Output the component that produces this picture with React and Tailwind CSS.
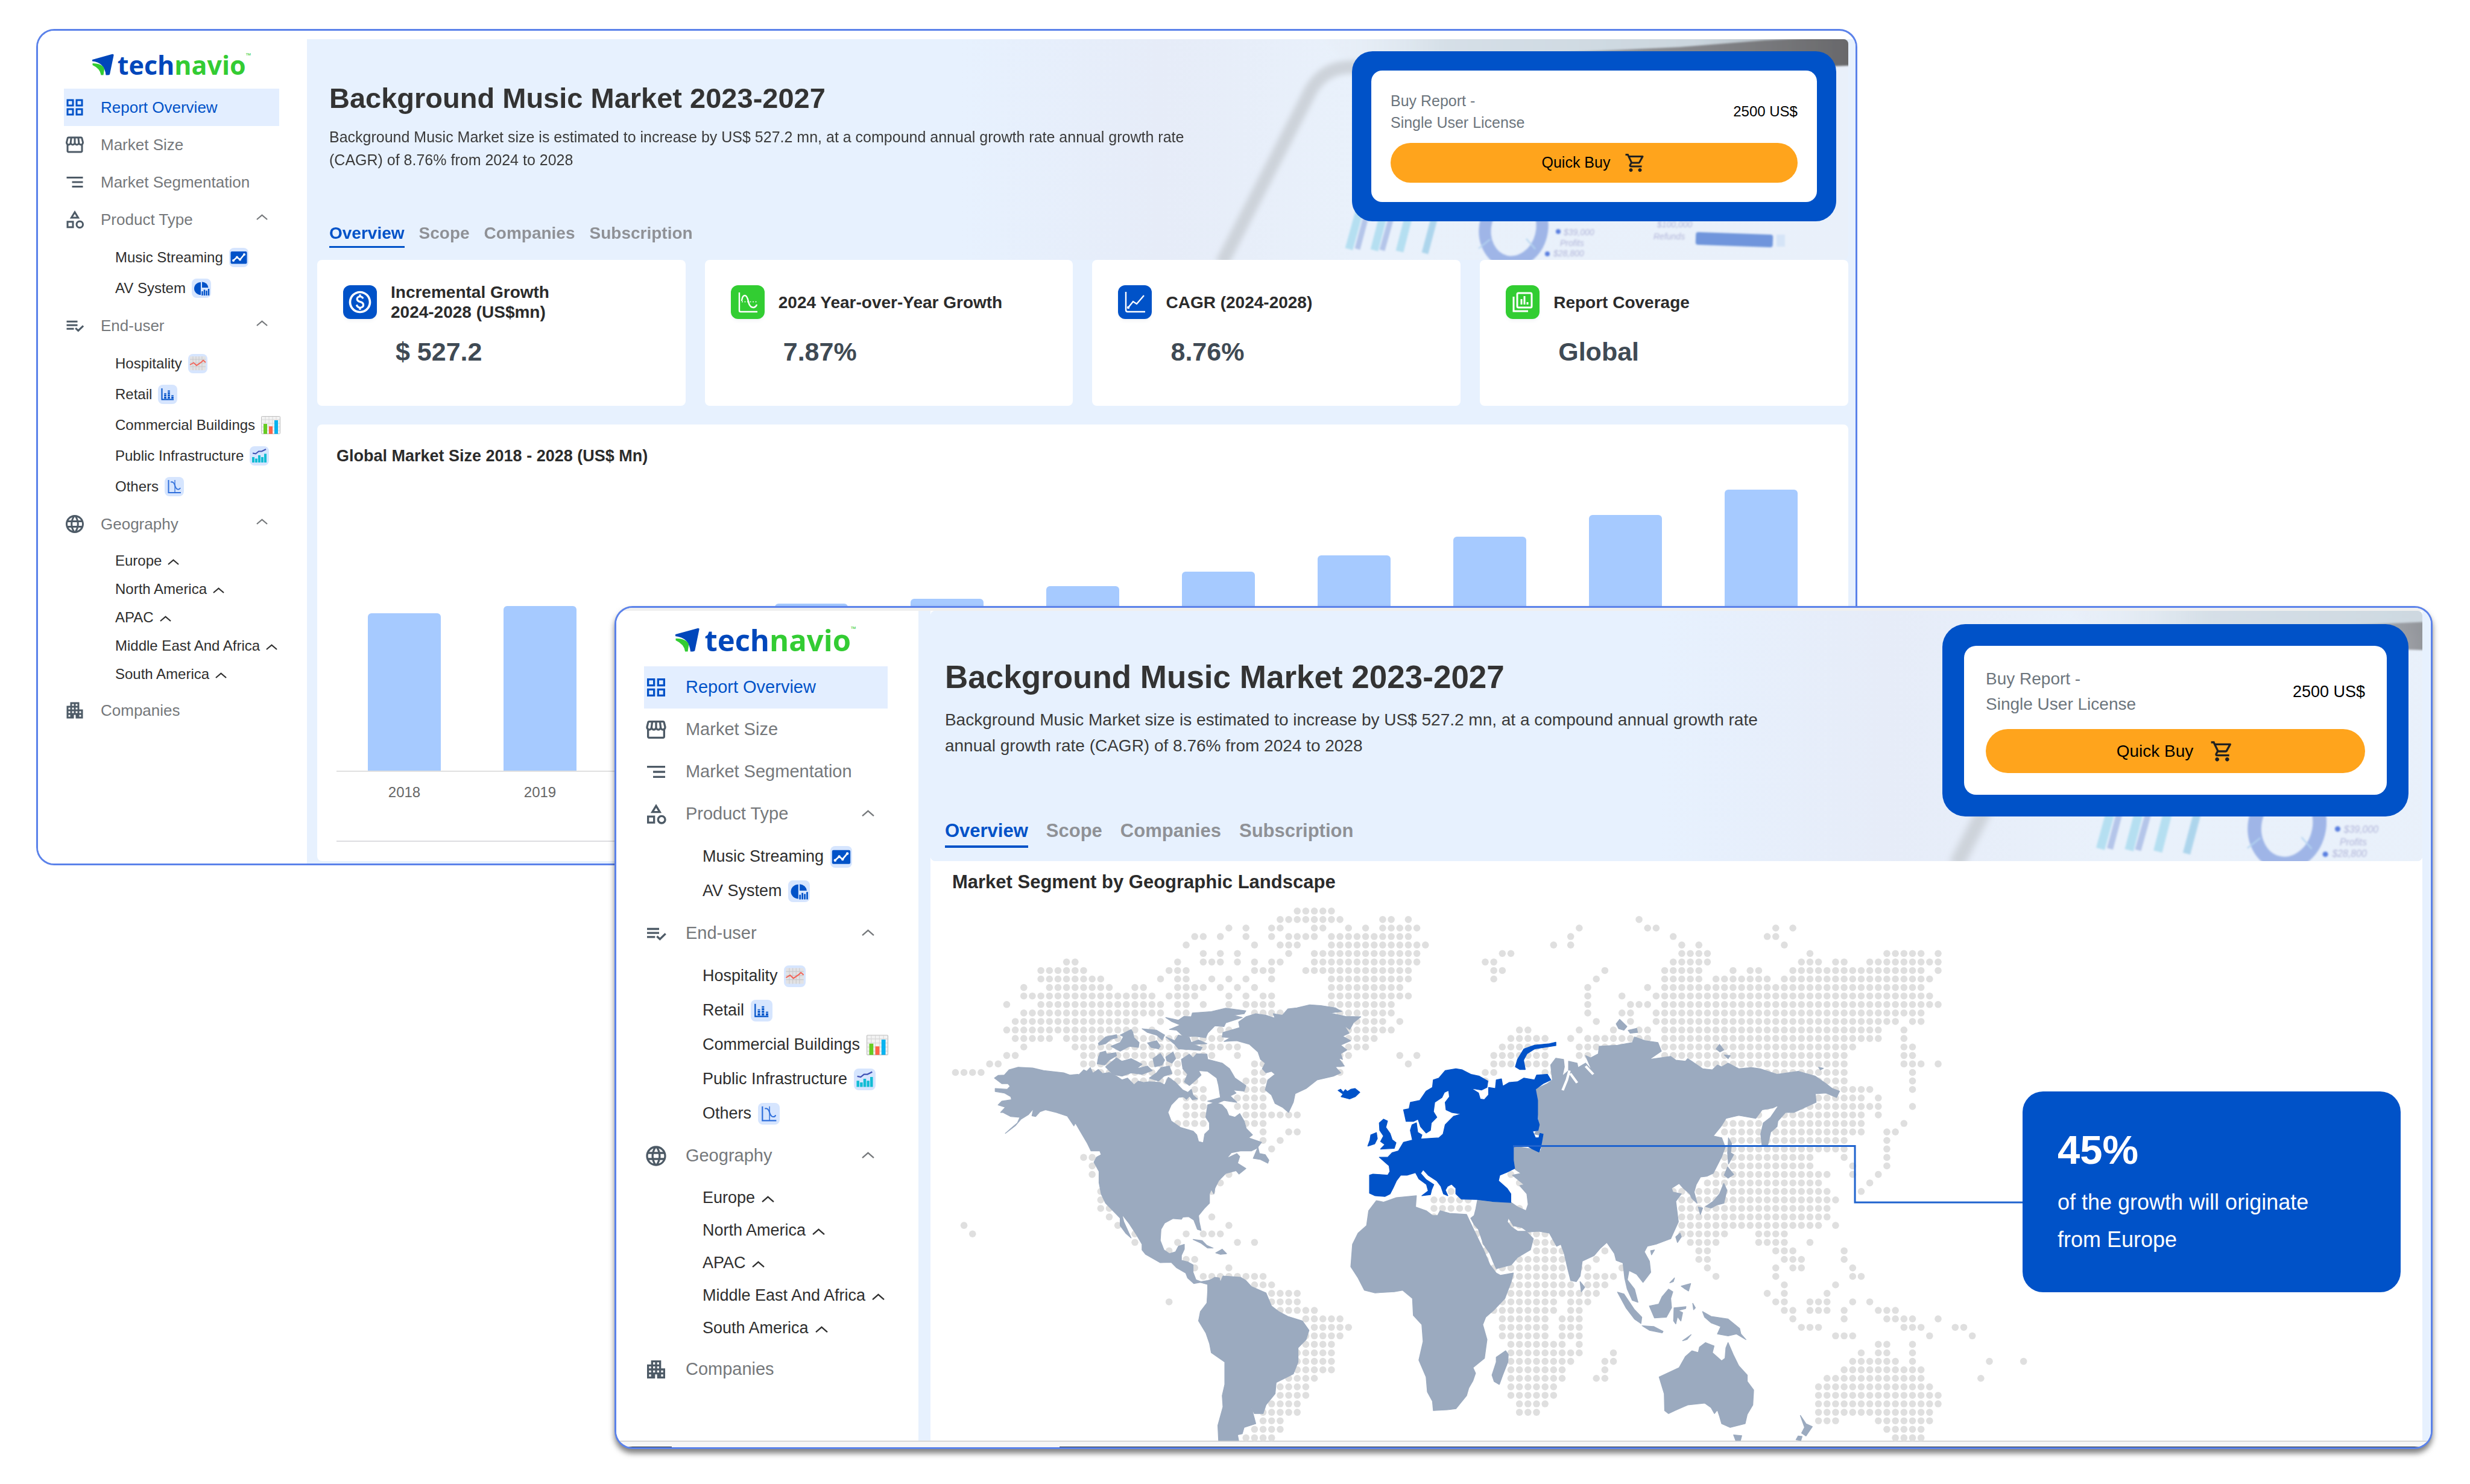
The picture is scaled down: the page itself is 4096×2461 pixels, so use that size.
import React from 'react';
import { clsx } from 'clsx';
import {
    MdApartment,
    MdLanguage,
    MdOutlineCategory,
    MdOutlineGridView,
    MdOutlinePaid,
    MdOutlineShoppingCart,
    MdOutlineStorefront,
    MdSegment,
} from 'react-icons/md';

/* The same report is shown in two windows, one of them slightly larger */
const SIZES = {
    md: {
        sidebar: 'w-[446px] pl-[43px] pr-[46px]',
        logoRow: 'h-24 pt-4 gap-[6px]',
        logoText: 'text-[43px]',
        logoMark: 'h-9 w-9',
        row: 'h-[62px] gap-[25px] text-[26px]',
        rowIcon: 'h-9 w-9',
        chevronWrap: 'pr-[19px] pb-2',
        chevron: 'h-[10px] w-[19px]',
        group: 'py-[6px] pl-[85px]',
        child: 'text-[24px] gap-[10px]',
        badgeRow: 'h-[51px]',
        plainRow: 'h-[47px]',
        badge: 'h-8 w-8',
        banner: 'min-h-[366px] pl-5 pr-5 pt-5',
        h1: 'mt-[50px] text-[47px] leading-[56px]',
        lead: 'mt-[17px] max-w-[1440px] text-[25px] leading-[38px]',
        tabs: 'mb-5 gap-6 text-[28px]',
        tab: 'border-b-[3px] leading-[36px] pb-[3px]',
        buy: 'w-[803px] rounded-[34px] p-8',
        buyCard: 'rounded-[18px] p-8 gap-4 text-[25px]',
        buyLabel: 'leading-[36px]',
        price: 'text-[24px]',
        buyButton: 'h-[66px] gap-6',
        cart: 'h-9 w-9',
    },
    lg: {
        sidebar: 'w-[501px] pl-[46px] pr-[51px]',
        logoRow: 'h-[92px] pt-1 gap-2',
        logoText: 'text-[49px]',
        logoMark: 'h-10 w-10',
        row: 'h-[70px] gap-[29px] text-[29px]',
        rowIcon: 'h-10 w-10',
        chevronWrap: 'pr-[22px] pb-1',
        chevron: 'h-[11px] w-[21px]',
        group: 'py-[7px] pl-[97px]',
        child: 'text-[27px] gap-[11px]',
        badgeRow: 'h-[57px]',
        plainRow: 'h-[54px]',
        badge: 'h-9 w-9',
        banner: 'min-h-[415px] pl-6 pr-[23px] pt-[22px]',
        h1: 'mt-[56px] text-[53px] leading-[64px]',
        lead: 'mt-[17px] max-w-[1400px] text-[28px] leading-[43px]',
        tabs: 'mb-[22px] gap-[30px] text-[31px]',
        tab: 'border-b-4 leading-[40px] pb-1',
        buy: 'w-[773px] rounded-[38px] p-9',
        buyCard: 'rounded-[20px] px-9 pt-[34px] pb-9 gap-5 text-[28px]',
        buyLabel: 'leading-[42px]',
        price: 'text-[27px]',
        buyButton: 'h-[73px] gap-7',
        cart: 'h-10 w-10',
    },
};

/* ---------- small drawings ---------- */

const LogoMark = ({ className }) => (
    <svg viewBox="0 0 36 35" className={className} aria-hidden="true">
        <path d="M0 9.5 33 0.3Q36 0 35.6 2L29 34Q28 35 26 35H22.5Q20.5 14 0 12Z" fill="#0047BB" />
        <path d="M0.5 15.5Q18 16 20 25L18.5 35H14.500Q13 24 0.5 18.500Z" fill="#33CC33" />
    </svg>
);

const Chevron = ({ className }) => (
    <svg viewBox="0 0 20 10" className={className} fill="none" stroke="currentColor" strokeWidth="2.2" aria-hidden="true">
        <path d="M1 9.300 10 1.500 19 9.300" />
    </svg>
);

const ListCheck = ({ className }) => (
    <svg viewBox="0 0 24 24" className={className} fill="none" stroke="currentColor" strokeWidth="2" aria-hidden="true">
        <path d="M3 7.500H15M3 11.500H15M3 15.500H11M12.800 14.800 15.800 17.600 21.400 12.200" />
    </svg>
);

const badges = {
    stream: (
        <>
            <rect x="2.500" y="6" width="27" height="20.500" rx="2" fill="#0052C8" />
            <path d="M7 21 13 15.500 18 19.500 25 11" fill="none" stroke="#fff" strokeWidth="2.400" />
            <g fill="#fff">
                <circle cx="7" cy="21" r="2" />
                <circle cx="13" cy="15.500" r="2" />
                <circle cx="18" cy="19.500" r="2" />
                <circle cx="25" cy="11" r="2" />
            </g>
        </>
    ),
    pie: (
        <>
            <path d="M15 6A11 10.500 0 1 0 15 27V17Z" fill="#0052C8" />
            <path d="M17 5.500A11 10.500 0 0 1 27.500 15H17Z" fill="#0052C8" />
            <path d="M17.500 28V21M21 28V18.500M24.500 28V20M28 28V17" stroke="#0052C8" strokeWidth="2.400" />
        </>
    ),
    line: (
        <>
            <rect x="3" y="4" width="26" height="23" fill="#E2E2E4" />
            <path d="M3 9H29M3 15H29M3 21H29M8 4V27M13 4V27M18 4V27M23 4V27" stroke="#C9C9CC" strokeWidth="1" />
            <path d="M3 18 9 14.500 14 19 22 13.500 25 10.500 29 14" fill="none" stroke="#F26458" strokeWidth="1.800" />
        </>
    ),
    bars: (
        <>
            <path d="M6.500 6V24.500H26" fill="none" stroke="#0052C8" strokeWidth="2" />
            <path d="M12 23V14M18 23V9.500M24 23V17.500" stroke="#0052C8" strokeWidth="3.600" strokeDasharray="3 0.8" />
        </>
    ),
    columns: (
        <>
            <rect x="0.500" y="1.500" width="31" height="29" rx="1" fill="#F3F3F3" stroke="#BDBDBD" />
            <path d="M1 7H31M1 13H31M1 19H31M1 25H31M7 2V30M13 2V30M19 2V30M25 2V30" stroke="#D8D8D8" strokeWidth="1" />
            <rect x="4" y="14" width="6" height="16.500" fill="#66CC22" />
            <rect x="13" y="18" width="6" height="12.500" fill="#FF6347" />
            <rect x="22" y="8" width="6" height="22.500" fill="#09B3F0" />
        </>
    ),
    mixed: (
        <>
            <path d="M6 27V18M11 27V20.500M16 27V15M21 27V18M26 27V12.500" stroke="#12BCD4" strokeWidth="4" />
            <path d="M5 11.500 10 12.500 15 8.500 20 8.500 27 5" fill="none" stroke="#3F51B5" strokeWidth="2" />
        </>
    ),
    curve: (
        <>
            <path d="M6.500 5V26H27" fill="none" stroke="#2F6FDB" strokeWidth="2" />
            <path d="M17 5V26" stroke="#2F6FDB" strokeWidth="1.300" />
            <path d="M10 8.500Q15 7 17 14T23 20.500Q25 20.500 26 18" fill="none" stroke="#2F6FDB" strokeWidth="1.800" />
        </>
    ),
};

const Badge = ({ name, className }) => (
    <svg
        viewBox="0 0 32 32"
        className={clsx('shrink-0', name !== 'columns' && 'rounded-lg bg-[#D6E5FE]', className)}
        aria-hidden="true"
    >
        {badges[name]}
    </svg>
);

const CurveIcon = () => (
    <svg viewBox="0 0 40 40" className="h-10 w-10" fill="none" stroke="#fff" strokeWidth="2.400" aria-hidden="true">
        <path d="M6 4V34Q6 36 8 36H36" />
        <path d="M10 18Q11 9 15 9 19 9 21 19T30 29Q34 28 35 24" />
        <path d="M10 19.500H36" strokeDasharray="2 2.500" strokeWidth="1.600" />
    </svg>
);

const TrendIcon = () => (
    <svg viewBox="0 0 40 40" className="h-10 w-10" fill="none" stroke="#fff" strokeWidth="2.400" aria-hidden="true">
        <path d="M5 3V33Q5 36 8 36H37" />
        <path d="M9 29 17 19 23 23 35 9" />
        <circle cx="9" cy="29" r="1" />
    </svg>
);

const CoverageIcon = () => (
    <svg viewBox="0 0 40 40" className="h-10 w-10" fill="none" stroke="#fff" strokeWidth="3" aria-hidden="true">
        <rect x="11" y="5" width="24" height="24" rx="2" />
        <path d="M5 11V35H29" />
        <path d="M18 24V15M23 24V10M28 24V20" />
    </svg>
);

/* ---------- sidebar ---------- */

const NAV = [
    { label: 'Report Overview', icon: MdOutlineGridView, active: true },
    { label: 'Market Size', icon: MdOutlineStorefront },
    { label: 'Market Segmentation', icon: MdSegment },
    {
        label: 'Product Type',
        icon: MdOutlineCategory,
        children: [
            { label: 'Music Streaming', badge: 'stream' },
            { label: 'AV System', badge: 'pie' },
        ],
    },
    {
        label: 'End-user',
        icon: ListCheck,
        children: [
            { label: 'Hospitality', badge: 'line' },
            { label: 'Retail', badge: 'bars' },
            { label: 'Commercial Buildings', badge: 'columns' },
            { label: 'Public Infrastructure', badge: 'mixed' },
            { label: 'Others', badge: 'curve' },
        ],
    },
    {
        label: 'Geography',
        icon: MdLanguage,
        children: [
            { label: 'Europe' },
            { label: 'North America' },
            { label: 'APAC' },
            { label: 'Middle East And Africa' },
            { label: 'South America' },
        ],
    },
    { label: 'Companies', icon: MdApartment },
];

const NavItem = ({ item, s }) => {
    const Icon = item.icon;
    const rowClass = clsx(
        'flex w-full items-center whitespace-nowrap text-left',
        item.active ? 'bg-[#E3EEFF] text-[#0052C8]' : 'text-[#75787B]',
        s.row
    );
    const icon = <Icon className={clsx('shrink-0', !item.active && 'text-[#4D5A66]', s.rowIcon)} />;

    if (!item.children) {
        return (
            <li>
                <a href="#" className={rowClass}>
                    {icon}
                    <span>{item.label}</span>
                </a>
            </li>
        );
    }

    return (
        <li>
            <button type="button" className={rowClass}>
                {icon}
                <span className="flex-1">{item.label}</span>
                <span className={s.chevronWrap}>
                    <Chevron className={s.chevron} />
                </span>
            </button>
            <ul className={s.group}>
                {item.children.map((child) => (
                    <li key={child.label}>
                        <a
                            href="#"
                            className={clsx(
                                'flex items-center whitespace-nowrap text-[#2E2E2E]',
                                s.child,
                                child.badge ? s.badgeRow : s.plainRow
                            )}
                        >
                            <span>{child.label}</span>
                            {child.badge ? (
                                <Badge name={child.badge} className={s.badge} />
                            ) : (
                                <Chevron className={clsx('mt-1', s.chevron)} />
                            )}
                        </a>
                    </li>
                ))}
            </ul>
        </li>
    );
};

const Sidebar = ({ s }) => (
    <aside className={clsx('shrink-0 bg-white', s.sidebar)}>
        <div className={clsx('flex items-center justify-center', s.logoRow)}>
            <LogoMark className={s.logoMark} />
            <div className={clsx("flex font-['Open_Sans',sans-serif] font-bold leading-none text-[#0047BB]", s.logoText)}>
                <span>tech</span>
                <span className="text-[#33CC33]">navio</span>
                <span className="text-[11px] font-normal text-[#33CC33]">™</span>
            </div>
        </div>
        <nav>
            <ul>
                {NAV.map((item) => (
                    <NavItem key={item.label} item={item} s={s} />
                ))}
            </ul>
        </nav>
    </aside>
);

/* ---------- banner ---------- */

const BannerArt = ({ id, full }) => (
    <svg
        viewBox="0 0 2539 366"
        preserveAspectRatio="xMinYMin slice"
        className="absolute inset-0 h-full w-full"
        aria-hidden="true"
    >
        <defs>
            <linearGradient id={`${id}-base`} x1="0" x2="1" y1="0" y2="0">
                <stop offset="0.42" stopColor="#E7F1FE" />
                <stop offset="0.55" stopColor="#E6ECF8" />
                <stop offset="0.68" stopColor="#E9F1FB" />
                <stop offset="1" stopColor="#E9F0FA" />
            </linearGradient>
            <linearGradient id={`${id}-top`} x1="0" x2="1" y1="0" y2="0">
                <stop offset="0" stopColor="#E9EDF4" stopOpacity="0" />
                <stop offset="0.25" stopColor="#D5DFE7" />
                <stop offset="0.7" stopColor="#CBD6DE" />
                <stop offset="1" stopColor="#9DA3A8" />
            </linearGradient>
            <linearGradient id={`${id}-dark`} x1="0" x2="1" y1="0" y2="0">
                <stop offset="0" stopColor="#A5AAB0" stopOpacity="0.4" />
                <stop offset="0.4" stopColor="#8E9095" />
                <stop offset="1" stopColor="#666668" />
            </linearGradient>
            <filter id={`${id}-soft`} x="-20%" y="-20%" width="140%" height="140%">
                <feGaussianBlur stdDeviation="5" />
            </filter>
            <filter id={`${id}-fine`} x="-20%" y="-20%" width="140%" height="140%">
                <feGaussianBlur stdDeviation="1.5" />
            </filter>
        </defs>
        <rect width="2539" height="366" fill={`url(#${id}-base)`} />
        <path d="M1640-20H2560V30L2100 36 1780 34 1700 30Z" fill={`url(#${id}-top)`} filter={`url(#${id}-soft)`} />
        <path
            d="M1500 372 1642 96Q1664 46 1716 46L2000 48"
            fill="none"
            stroke="#CDD3DA"
            strokeWidth="22"
            filter={`url(#${id}-soft)`}
        />
        <path d="M1960 26 2260 13 2400 2 2560-6V43L2200 58 1960 50Z" fill={`url(#${id}-dark)`} filter={`url(#${id}-fine)`} />
        <g filter={`url(#${id}-fine)`} fill="none">
            <g stroke="#B5DFF1" strokeWidth="13">
                <path d="M1738 250 1711 348M1779 250 1753 350M1821 250 1795 352" />
                <path d="M1865 250 1837 355" strokeWidth="11" stroke="#ADD5EC" />
            </g>
            <path d="M1751 250 1725 348M1794 250 1766 350" stroke="#B4C5E9" strokeWidth="9" />
            <ellipse cx="1984" cy="314" rx="47" ry="56" stroke="#9FB5E7" strokeWidth="20" transform="rotate(14 1984 314)" />
            <path d="M1926 347 1945 332M2005 331 2020 348" stroke="#B5D5F1" strokeWidth="2" />
        </g>
        <rect x="2286" y="322" width="128" height="21" rx="4" fill="#6F95DC" transform="rotate(2 2350 332)" filter={`url(#${id}-fine)`} />
        <rect x="2420" y="324" width="14" height="20" fill="#D5E4F7" filter={`url(#${id}-fine)`} />
        <g
            className="font-['Liberation_Sans',sans-serif] italic"
            fontSize="14"
            fill="#8E8FC4"
            opacity="0.6"
            filter={`url(#${id}-fine)`}
        >
            <text x="2067" y="325">$39,000</text>
            <text x="2061" y="343">Profits</text>
            <text x="2050" y="360">$28,800</text>
            {full && (
                <>
                    <text x="2222" y="312">$100,000</text>
                    <text x="2216" y="332">Refunds</text>
                </>
            )}
        </g>
        <g fill="#5A7FE0" filter={`url(#${id}-fine)`}>
            <circle cx="2058" cy="319" r="4" />
            <circle cx="2040" cy="356" r="4" />
        </g>
    </svg>
);

const TABS = ['Overview', 'Scope', 'Companies', 'Subscription'];

const BuyBox = ({ s }) => (
    <div className={clsx('shrink-0 self-start bg-[#0052C8]', s.buy)}>
        <div className={clsx('flex flex-col bg-white', s.buyCard)}>
            <div className="flex items-center justify-between">
                <p className={clsx('text-[#6C757D]', s.buyLabel)}>
                    Buy Report -<br />
                    Single User License
                </p>
                <p className={clsx('text-black', s.price)}>2500 US$</p>
            </div>
            <button
                type="button"
                className={clsx('flex items-center justify-center rounded-full bg-[#FFA41C] text-black', s.buyButton)}
            >
                Quick Buy
                <MdOutlineShoppingCart className={clsx('text-[#212121]', s.cart)} />
            </button>
        </div>
    </div>
);

const Banner = ({ s, id, full }) => (
    <header className={clsx('relative flex overflow-hidden rounded-lg bg-[#E7F1FE]', s.banner)}>
        <BannerArt id={id} full={full} />
        <div className="relative flex flex-1 flex-col">
            <h1 className={clsx('font-bold text-[#333333]', s.h1)}>Background Music Market 2023-2027</h1>
            <p className={clsx('text-[#3A3A3A]', s.lead)}>
                Background Music Market size is estimated to increase by US$ 527.2 mn, at a compound annual growth rate
                annual growth rate (CAGR) of 8.76% from 2024 to 2028
            </p>
            <nav className={clsx('mt-auto flex font-bold', s.tabs)}>
                {TABS.map((tab, i) => (
                    <a
                        key={tab}
                        href="#"
                        className={clsx(i === 0 ? 'border-[#0052C8] text-[#0052C8]' : 'border-transparent text-[#8F9196]', s.tab)}
                    >
                        {tab}
                    </a>
                ))}
            </nav>
        </div>
        <div className="relative">
            <BuyBox s={s} />
        </div>
    </header>
);

/* ---------- overview page ---------- */

const STATS = [
    { title: 'Incremental Growth\n2024-2028 (US$mn)', value: '$ 527.2', tone: 'blue', icon: <MdOutlinePaid className="h-11 w-11 text-white" /> },
    { title: '2024 Year-over-Year Growth', value: '7.87%', tone: 'green', icon: <CurveIcon /> },
    { title: 'CAGR (2024-2028)', value: '8.76%', tone: 'blue', icon: <TrendIcon /> },
    { title: 'Report Coverage', value: 'Global', tone: 'green', icon: <CoverageIcon /> },
];

const StatCard = ({ stat }) => (
    <article className="rounded-lg bg-white px-[43px] pt-[37px] pb-[62px]">
        <div className="flex h-[66px] items-center gap-[23px]">
            <span
                className={clsx(
                    'flex h-14 w-14 shrink-0 items-center justify-center rounded-xl shadow-md shadow-gray-100',
                    stat.tone === 'blue' ? 'bg-[#0052C8]' : 'bg-[#32CD32]'
                )}
            >
                {stat.icon}
            </span>
            <h2 className="text-[28px] leading-[33px] font-bold whitespace-pre-line text-[#2B2B2B]">{stat.title}</h2>
        </div>
        <p className="mt-[21px] pl-[87px] text-[43px] leading-[56px] font-bold text-[#3F4A54]">{stat.value}</p>
    </article>
);

const AXIS_MAX = 502;

const MARKET = [
    { year: 2018, size: 261 },
    { year: 2019, size: 273 },
    { year: 2020, size: 268 },
    { year: 2021, size: 277 },
    { year: 2022, size: 285 },
    { year: 2023, size: 306 },
    { year: 2024, size: 330 },
    { year: 2025, size: 357 },
    { year: 2026, size: 388 },
    { year: 2027, size: 424 },
    { year: 2028, size: 466 },
];

const MarketChart = () => (
    <section className="mt-[31px] rounded-lg bg-white px-8 pt-8 pb-8">
        <h2 className="text-[27px] leading-[40px] font-bold text-[#2B2B2B]">Global Market Size 2018 - 2028 (US$ Mn)</h2>
        <div className="flex h-[504px] items-end border-b-2 border-[#E0E0E0]">
            {MARKET.map((m) => (
                <div key={m.year} className="flex h-full flex-1 items-end justify-center">
                    <div
                        className="w-[54%] rounded-t-md bg-[#A6CAFF]"
                        style={{ height: `${(m.size / AXIS_MAX) * 100}%` }}
                    />
                </div>
            ))}
        </div>
        <div className="flex border-b-2 border-[#DDDDE0] pt-4 pb-[62px] text-2xl leading-[36px] text-[#666666]">
            {MARKET.map((m) => (
                <span key={m.year} className="flex-1 text-center">
                    {m.year}
                </span>
            ))}
        </div>
    </section>
);

/* ---------- geography page ---------- */

// One entry per row of dots, as column ranges
const DOTS = [
    '40-44',
    '38-45 50-51 53 80',
    '32 34 37-38 42-43 46 48 50-54 73 81-82 96 98',
    '28-29 31 34 37 39-42 44-53 72 84 95-96',
    '27 35 38-40 44-55 70 72 85 87 97',
    '29 31 33 39 42-54 64-65 85-88 100 109-113 115',
    '13-14 26 29-31 33 35 37-38 42-54 62-63 84-88 99-101 103-104 107-115',
    '10-15 25-27 35-37 41-53 63-64 76 83-87 91 93-94 98-113 115',
    '10-17 24 26-27 30 32 34 37 44-53 63 75 83-87 89-95 97-114',
    '8 11-18 21-22 26-29 31 33 35 44-52 74 81 83-113',
    '8-23 25-28 32 34 36-37 44-53 74 78 82-114',
    '6 10-24 26-27 29 32 34-37 44-51 74 79-81 83-115',
    '8-24 26-27 35-38 45-51 74 78-79 82-113',
    '7-21 24 46-50 52 75 79 82-110 112-113',
    '6-21 23 31-32 46-51 66-67 73 77 80-81 83-108 111',
    '7-11 13-31 46-49 65-69 72 74-81 83-108 111',
    '8 14-33 46-48 64-69 73-80 83-105 111-112',
    '6-7 15-30 33 45-46 52 54 63-69 73-74 83-104 111-112',
    '4-5 15-30 35-36 45 53 63-69 84-104 111-113 115',
    '0-3 16-28 35-36 45 62-63 69-70 95-104 112',
    '21-28 34-36 62 100-104 112',
    '28-29 34-36 103-107 112',
    '27-29 33-36 101-106 108',
    '27-29 33-36 95 99-108 112',
    '27-29 34-40 94 97-106 108',
    '26-29 34-36 90-94 97-106 111',
    '36 39-40 90-94 96-106 109-110',
    '36 38 91-104 109',
    '37 90-104 109',
    '15-16 90-100 104 109',
    '16 90-100 105 109',
    '16 32 65 89-102 105 108',
    '31 66 88-101 107',
    '17 30 58 84-102 106',
    '17 56-60 85-103',
    '17-18 56-60 66 85-102',
    '18 30 56 65 85-102',
    '1 19 32 61 65-66 85-101 103',
    '2 21 27 29-31 61-62 67-69 85-90 94-97',
    '21 26 33 35 62 68-70 86-89 94-97 100',
    '25 62 68-71 76 87-88 96-98 104',
    '27-28 62 66-71 75 87-88 97-99 104',
    '28 32 63-71 73-74 78 88 96 98-99 105',
    '29-36 65-71 74-77 89 96 105-106',
    '35-37 65-72 74-76 97 103',
    '37-40 65-75 95 97 102',
    '25 37-40 64-70 72-74 96-97 100-102 105 107',
    '38-42 63-70 72-73 97-98 100-102 104 108-110',
    '41-45 64-69 71-73 98 104 109-112 115',
    '42-46 64-69 71-73 99-101 111-113 117-118',
    '41-45 64-69 71-73 103-105 114 119',
    '41-44 65-71 73 108-109 112',
    '40-44 65-73 77 106 108-109 112',
    '40-44 65-72 76-77 105-110 112 121 125',
    '40-44 65-71 76 104-113',
    '39-42 65-71 75-76 102-113 120',
    '38-41 65-70 101-114',
    '38-41 65-70 101-115',
    '37-40 66-69 101-115',
    '36-40 66-68 101-114',
    '36-38 101-103 108-114',
    '35-38 109-113',
    '34-37 110-113',
];

const expand = (row) =>
    row.split(' ').flatMap((part) => {
        const [from, to = from] = part.split('-').map(Number);
        return Array.from({ length: to - from + 1 }, (_, i) => from + i);
    });

const AMERICAS = [
    // mainland
    'M195 540 205 533 222 532 235 518 260 511 300 513 330 520 385 526 402 532 425 530 422 536 440 518 448 522 458 512 465 527 480 517 492 528 510 525 530 535 545 545 560 540 578 558 590 548 605 552 620 550 650 552 662 558 672 538 690 550 712 572 725 578 715 590 700 592 680 612 671 632 680 655 705 672 740 682 750 692 755 710 768 713 772 690 785 678 785 660 775 645 780 612 800 605 820 612 832 625 838 640 855 645 868 635 880 655 886 675 903 692 892 700 928 712 915 728 900 735 870 735 845 740 832 755 860 742 868 750 862 768 885 782 866 797 858 788 830 795 810 815 800 835 797 850 790 838 785 850 785 875 770 890 755 908 757 925 762 948 752 945 742 920 728 911 712 912 708 918 685 916 662 928 652 945 650 975 660 1000 675 1010 692 1005 700 990 716 985 716 998 708 1015 708 1028 725 1032 740 1040 740 1060 748 1080 762 1085 780 1082 795 1078 790 1095 760 1087 742 1090 725 1075 720 1062 695 1048 680 1033 650 1034 610 1012 600 1000 600 985 585 960 565 930 545 905 550 925 570 968 555 955 540 935 540 915 525 900 500 875 488 850 482 820 482 790 468 765 475 752 488 745 484 735 460 735 450 715 430 682 417 660 413 668 395 642 365 632 335 625 320 630 308 643 298 641 302 622 288 638 268 650 252 668 225 688 240 675 258 660 265 645 240 643 218 632 212 632 225 618 205 612 215 602 242 598 240 590 222 580 197 576 197 568 230 570 238 562 232 555 215 555Z',
    // arctic islands
    'M480 485 485 472 500 468 503 476 528 472 530 480 510 492 498 505 477 502Z',
    'M500 510 530 486 545 495 570 488 600 503 585 515 615 508 628 520 600 530 570 526 545 535 520 530Z',
    'M480 447 500 430 530 424 532 432 515 436 500 448 482 452Z',
    'M515 455 540 445 550 428 575 420 578 432 592 445 590 458 565 455 540 468Z',
    'M540 425 570 410 575 418 555 432Z',
    'M600 408 640 412 662 425 655 438 640 425 615 418Z',
    'M615 446 640 440 650 455 645 462 625 458Z',
    'M630 488 650 474 662 492 655 505 635 510Z',
    'M665 484 685 470 692 488 682 500 668 494Z',
    'M620 540 640 526 652 512 675 508 682 528 660 535 645 548Z',
    'M665 378 700 385 715 375 735 376 738 366 790 362 830 353 885 360 880 368 850 372 875 378 830 392 825 402 800 400 780 420 775 432 745 428 715 430 695 412 675 410 705 398 680 388Z',
    'M665 430 690 440 700 425 730 432 735 445 755 438 778 448 740 450 765 458 760 466 700 462 690 450Z',
    'M708 490 730 476 740 486 750 475 778 476 780 490 820 500 840 515 855 540 885 560 880 575 850 572 858 580 842 588 860 605 825 600 805 608 780 602 815 592 810 560 805 540 780 522 755 520 762 532 748 545 730 560 716 550 725 530 712 515Z',
    'M698 578 722 582 735 570 740 586 752 596 738 598 730 588 722 597Z',
    'M905 755 918 725 922 742 938 745 948 760 945 768 925 758Z',
    'M740 972 765 975 778 988 795 995 780 995 762 982Z',
    'M802 1008 820 998 832 1010 815 1012Z',
    // Greenland
    'M825 442 842 432 820 430 822 418 868 405 865 390 885 376 912 368 940 372 965 380 960 368 985 372 1000 355 1025 352 1060 344 1090 346 1130 352 1148 362 1115 366 1158 375 1200 376 1180 392 1170 410 1155 400 1168 420 1150 428 1172 440 1145 452 1162 465 1145 475 1150 490 1138 485 1155 508 1130 510 1145 526 1125 535 1080 545 1050 568 1020 582 1015 605 1002 632 985 618 965 608 955 585 938 572 945 545 965 530 955 522 940 526 930 515 938 500 925 490 918 470 895 450 860 440Z',
    // South America
    'M780 1085 800 1073 812 1075 815 1086 822 1070 870 1073 885 1082 900 1098 940 1115 955 1150 975 1165 1000 1178 1040 1190 1058 1215 1050 1240 1028 1262 1028 1300 1015 1332 968 1355 965 1385 940 1415 932 1438 908 1438 900 1422 908 1450 912 1465 880 1475 875 1492 862 1495 865 1510 810 1510 808 1470 822 1420 820 1390 827 1360 827 1300 790 1275 785 1250 775 1222 755 1190 760 1165 778 1142 780 1110Z',
];

const EASTERN = [
    // Asia with Arabia
    'M568 505 580 487 598 490 600 510 595 535 610 520 610 495 630 500 632 512 650 500 665 520 650 480 662 486 680 475 682 455 725 452 760 445 765 430 790 440 820 445 828 468 800 490 850 482 862 492 885 495 890 488 925 515 948 518 960 505 970 510 985 500 1010 515 1040 512 1060 515 1100 530 1150 522 1190 535 1215 555 1230 568 1247 575 1240 592 1215 580 1190 582 1192 605 1140 632 1120 632 1102 655 1100 670 1085 685 1078 720 1065 720 1062 690 1068 660 1085 645 1105 612 1090 620 1065 625 1050 648 1010 640 980 648 968 670 950 695 970 700 978 725 970 750 950 795 935 803 920 805 910 825 905 845 912 875 900 862 895 850 880 835 870 822 852 835 855 845 875 850 862 870 868 925 858 950 850 970 815 985 795 990 788 1005 800 1030 803 1060 785 1087 770 1065 752 1055 748 1080 765 1105 773 1140 760 1135 748 1105 742 1075 738 1035 722 1028 718 1010 700 980 685 995 670 1015 642 1030 637 1070 628 1085 615 1082 608 1050 600 1010 592 985 582 990 565 955 540 950 515 952 500 940 480 935 468 913 466 925 475 938 490 950 510 950 527 970 520 1000 490 1020 475 1040 440 1050 432 1030 425 1010 410 985 398 945 388 932 380 915 388 908 392 890 396 866 475 873 490 885 510 895 515 878 512 850 495 828 505 825 478 800 498 795 485 785 480 765 480 722 525 730 545 735 550 695 530 690 541 665 535 600 532 570 560 555 572 545Z',
    // Africa
    'M158 868 175 872 205 860 252 855 250 885 275 895 290 908 302 908 308 895 330 902 370 905 378 925 395 965 410 1000 425 1040 440 1062 450 1068 480 1062 475 1085 460 1130 435 1160 415 1180 408 1200 418 1240 412 1290 385 1315 391 1330 385 1350 375 1370 370 1390 345 1425 325 1428 292 1430 290 1405 278 1380 275 1340 258 1295 268 1245 265 1200 245 1175 243 1130 220 1108 200 1112 155 1115 130 1108 115 1075 98 1045 102 985 115 955 135 935 140 895Z',
    'M430 1335 440 1300 440 1287 462 1270 468 1280 467 1300 455 1335 447 1360 435 1352Z',
    'M637 1085 648 1100 640 1112Z',
    // Japan, Sakhalin, Taiwan
    'M986 700 993 715 991 740 998 745 986 770 984 740Z',
    'M984 778 998 798 985 808 976 800Z',
    'M975 822 982 840 975 875 958 880 945 888 932 884 950 870 965 850Z',
    'M915 885 925 888 920 905Z',
    'M862 965 872 955 875 965 866 980Z',
    'M803 1002 812 1000 805 1013Z',
    // arctic islands
    'M722 395 730 383 747 402 740 412 728 408Z',
    'M750 412 770 407 772 418 755 420Z',
    'M957 462 965 450 975 465 966 470Z',
    'M976 478 990 480 985 488Z',
    'M1198 511 1209 514 1202 518Z',
    // South-East Asia
    'M725 1113 740 1118 765 1160 782 1180 780 1197 765 1185 745 1155Z',
    'M783 1203 810 1205 832 1218 830 1222 800 1215Z',
    'M800 1150 822 1145 830 1125 845 1105 855 1112 850 1130 852 1155 840 1180 812 1182Z',
    'M858 1155 886 1152 885 1157 868 1162 878 1168 874 1190 866 1178 862 1198 857 1190Z',
    'M875 1097 897 1090 892 1110 882 1103Z',
    'M848 1088 859 1075 856 1085Z',
    'M902 1143 908 1155 904 1160Z',
    'M878 1243 898 1227 888 1240Z',
    'M925 1165 945 1178 985 1185 1012 1210 1015 1225 1027 1240 1005 1225 985 1230 960 1225 968 1205 945 1195 930 1180Z',
    // Australia and New Zealand
    'M823 1340 870 1315 885 1285 900 1270 915 1275 918 1260 932 1248 952 1257 948 1275 970 1297 978 1290 980 1262 985 1248 997 1280 1010 1310 1030 1335 1030 1352 1045 1375 1043 1415 1030 1440 1025 1465 990 1475 970 1465 965 1445 960 1428 953 1438 945 1422 930 1410 890 1415 860 1430 845 1438 836 1430 835 1385Z',
    'M998 1495 1017 1497 1014 1510 1003 1510Z',
    'M1155 1443 1168 1465 1183 1473 1168 1498 1158 1490 1165 1475Z',
    'M1145 1508 1150 1498 1159 1499 1156 1510Z',
];

const EUROPE = [
    'M68 573 74 570 80 578 85 571 90 576 98 570 108 568 119 578 108 590 95 596 75 590 80 583Z',
    'M165 660 175 650 184 655 180 672 190 688 195 705 204 713 200 728 168 730 178 718 168 710 175 695 166 680Z',
    'M145 692 158 686 160 702 154 716 138 722 143 706Z',
    'M485 510 490 490 505 462 530 452 565 448 580 444 580 453 530 462 512 475 504 492 508 517 495 517Z',
    'M222 625 235 622 238 605 260 600 275 575 290 565 292 545 305 540 320 520 345 515 360 518 380 530 400 535 420 548 418 565 405 572 380 567 398 580 402 596 412 598 422 585 422 565 438 568 440 545 452 542 455 562 470 552 490 550 505 540 530 545 535 532 560 530 568 545 550 555 532 570 537 600 537 650 541 665 538 680 525 682 532 700 540 700 543 688 550 690 545 722 540 738 525 730 510 720 480 724 480 760 483 782 465 792 448 800 445 815 465 835 474 850 474 873 430 870 395 865 358 864 345 850 345 835 335 824 325 830 320 840 326 855 316 850 310 830 300 815 280 800 268 785 262 795 275 812 293 825 288 838 285 852 265 855 280 842 276 825 258 810 250 793 230 800 215 800 205 815 197 835 190 850 178 857 155 855 142 848 142 800 150 797 185 800 190 790 188 775 165 752 185 752 195 740 210 735 222 712 243 706 238 680 242 665 252 660 255 685 265 692 262 703 305 700 315 690 320 665 340 642 358 636 335 632 322 625 320 605 330 590 328 573 318 578 312 592 295 605 292 630 300 645 287 660 285 680 275 687 262 670 256 650 245 656 228 656Z',
];

const WorldMap = () => (
    <svg viewBox="0 0 1811 894" className="min-w-0 flex-1 overflow-visible" role="img" aria-label="World map">
        <g fill="#DFDFDF">
            {DOTS.map((row, r) =>
                expand(row).map((c) => <circle key={`${r}-${c}`} cx={41.4 + c * 14.17} cy={15.8 + r * 14.09} r="5.8" />)
            )}
        </g>
        <g
            transform="translate(-11.8 -41.8) scale(0.6044 0.6196)"
            fill="#9BAABF"
            stroke="#9BAABF"
            strokeWidth="2"
            strokeLinejoin="round"
        >
            {AMERICAS.map((d) => (
                <path key={d} d={d} />
            ))}
        </g>
        <g transform="translate(628 -41.8) scale(0.7052 0.6196)" strokeWidth="2" strokeLinejoin="round">
            <g fill="#9BAABF" stroke="#9BAABF">
                {EASTERN.map((d) => (
                    <path key={d} d={d} />
                ))}
            </g>
            <path
                d="M596 573 606 545 612 520M614 528 630 553M650 508 668 530"
                fill="none"
                stroke="#fff"
                strokeWidth="6"
            />
            <g fill="#0052C8" stroke="#0052C8">
                {EUROPE.map((d) => (
                    <path key={d} d={d} />
                ))}
            </g>
        </g>
        <path d="M966 405.5H1533V499H1811" fill="none" stroke="#1F63CE" strokeWidth="3" />
    </svg>
);

const GeographyPanel = () => (
    <section className="bg-white pt-[15px]">
        <h2 className="pl-9 text-[31px] leading-[40px] font-bold text-[#2B2B2B]">Market Segment by Geographic Landscape</h2>
        <div className="mt-3 flex items-start pr-9">
            <WorldMap />
            <div className="relative mt-[315px] w-[627px] shrink-0 rounded-[34px] bg-[#0052C8] pt-[57px] pb-14 pl-[58px] text-white">
                <p className="text-[67px] leading-[80px] font-bold">45%</p>
                <p className="mt-4 max-w-[440px] text-4xl leading-[62px]">of the growth will originate from Europe</p>
            </div>
        </div>
    </section>
);

/* ---------- windows ---------- */

const OverviewWindow = () => (
    <div className="ml-[60px] w-[73.73%] overflow-hidden rounded-[30px] border-[3px] border-[#5B82EA] bg-white pt-[14px]">
        <div className="flex">
            <Sidebar s={{ ...SIZES.md, sidebar: clsx(SIZES.md.sidebar, '-mt-[14px]') }} />
            <main className="min-w-0 flex-1 bg-[#E7F1FE] pr-3 pb-1 pl-[17px]">
                <Banner s={SIZES.md} id="overview" full />
                <div className="grid grid-cols-4 gap-8">
                    {STATS.map((stat) => (
                        <StatCard key={stat.title} stat={stat} />
                    ))}
                </div>
                <MarketChart />
            </main>
        </div>
    </div>
);

const GeographyWindow = () => (
    <div className="relative -mt-[430px] mr-[62px] ml-auto w-[73.61%] overflow-hidden rounded-[30px] border-[3px] border-[#5B82EA] bg-white shadow-[0_7px_10px_rgba(0,0,0,0.5)]">
        <div className="h-[5px] bg-[#EFEFEF]" />
        <div className="flex">
            <Sidebar s={SIZES.lg} />
            <main className="min-w-0 flex-1 bg-[#E7F1FE] pr-[14px] pl-5">
                <div className="bg-white">
                    <Banner s={SIZES.lg} id="geography" />
                </div>
                <GeographyPanel />
            </main>
        </div>
        <div className="flex h-[11px] items-end border-t-2 border-[#D6D6D6] bg-[#F6F6F6]">
            <div className="ml-5 h-px w-[72px] bg-[#1E2A3A]" />
            <div className="mr-4 ml-[643px] h-px flex-1 bg-[#1E2A3A]" />
        </div>
    </div>
);

export default function App() {
    return (
        <div className="min-h-screen w-full overflow-hidden bg-white pt-12 pb-14 font-['Liberation_Sans',Arial,sans-serif]">
            <OverviewWindow />
            <GeographyWindow />
        </div>
    );
}
